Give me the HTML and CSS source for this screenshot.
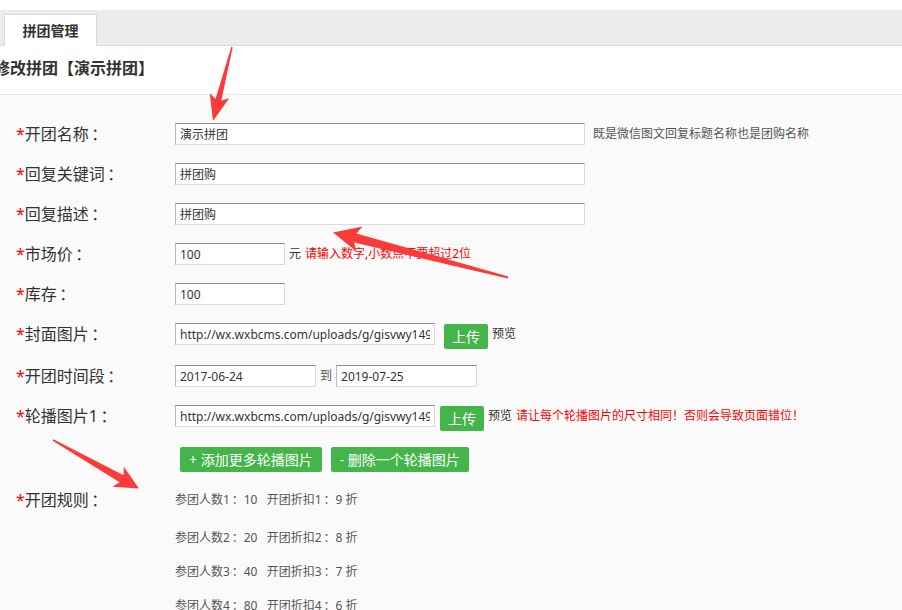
FILE: index.html
```html
<!DOCTYPE html>
<html lang="zh-CN">
<head>
<meta charset="utf-8">
<title>拼团管理</title>
<link rel="stylesheet" href="styles.css">
</head>
<body>
<div class="top">
  <div class="tabbar"><div class="tab">拼团管理</div></div>
  <div class="head"><h2 class="title">修改拼团【演示拼团】</h2></div>
</div>
<form class="form">
  <div class="row">
    <div class="label"><span class="req">*</span>开团名称<span class="p">：</span></div>
    <div class="field"><input class="input w-lg" value="演示拼团"><span class="hint">既是微信图文回复标题名称也是团购名称</span></div>
  </div>
  <div class="row">
    <div class="label"><span class="req">*</span>回复关键词<span class="p">：</span></div>
    <div class="field"><input class="input w-lg" value="拼团购"></div>
  </div>
  <div class="row">
    <div class="label"><span class="req">*</span>回复描述<span class="p">：</span></div>
    <div class="field"><input class="input w-lg" value="拼团购"></div>
  </div>
  <div class="row">
    <div class="label"><span class="req">*</span>市场价<span class="p">：</span></div>
    <div class="field"><input class="input w-sm" value="100"><span class="unit">元</span><span class="err">请输入数字,小数点不要超过2位</span></div>
  </div>
  <div class="row">
    <div class="label"><span class="req">*</span>库存<span class="p">：</span></div>
    <div class="field"><input class="input w-sm" value="100"></div>
  </div>
  <div class="row row-tall">
    <div class="label"><span class="req">*</span>封面图片<span class="p">：</span></div>
    <div class="field"><input class="input w-md" value="http://wx.wxbcms.com/uploads/g/gisvwy1495012345/5/a/3/thumb_5923e5b4.jpg"><span class="btn btn-up upload-a">上传</span><span class="preview">预览</span></div>
  </div>
  <div class="row">
    <div class="label"><span class="req">*</span>开团时间段<span class="p">：</span></div>
    <div class="field"><input class="input w-date" value="2017-06-24"><span class="to">到</span><input class="input w-date" value="2019-07-25"></div>
  </div>
  <div class="row row-tall">
    <div class="label"><span class="req">*</span>轮播图片1<span class="p">：</span></div>
    <div class="field"><input class="input w-md" value="http://wx.wxbcms.com/uploads/g/gisvwy1495012345/5/a/3/thumb_5923e5b4.jpg"><span class="btn btn-up upload-b">上传</span><span class="preview">预览</span><span class="err">请让每个轮播图片的尺寸相同！否则会导致页面错位！</span></div>
  </div>
  <div class="actions">
    <span class="btn btn-wide">+ 添加更多轮播图片</span>
    <span class="btn btn-wide">- 删除一个轮播图片</span>
  </div>
  <div class="row">
    <div class="label"><span class="req">*</span>开团规则<span class="p">：</span></div>
    <div class="rules">
      <div class="rule rule-first">参团人数1<span class="p">：</span>10&nbsp;&nbsp;&nbsp;开团折扣1<span class="p">：</span>9 折</div>
      <div class="rule">参团人数2<span class="p">：</span>20&nbsp;&nbsp;&nbsp;开团折扣2<span class="p">：</span>8 折</div>
      <div class="rule">参团人数3<span class="p">：</span>40&nbsp;&nbsp;&nbsp;开团折扣3<span class="p">：</span>7 折</div>
      <div class="rule">参团人数4<span class="p">：</span>80&nbsp;&nbsp;&nbsp;开团折扣4<span class="p">：</span>6 折</div>
    </div>
  </div>
</form>
<svg class="marks" width="902" height="610" viewBox="0 0 902 610" aria-hidden="true">
  <polygon points="232.68,47.17 221.38,100.44 229.16,98.31 213,121 209.78,93.33 215.58,98.94 231.32,46.83"/>
  <polygon points="508.25,276.5 356.4,233.4 362.5,226.5 333,232.5 356.5,251.5 354.2,242.6 507.75,278.5"/>
  <polygon points="52.6,440.7 119.64,482.15 112.45,486.73 139,488.5 123.75,466.67 123.56,475.17 53.4,439.3"/>
</svg>
</body>
</html>
```

FILE: styles.css
```css
html, body {
  margin: 0;
  padding: 0;
  overflow: hidden;
}

body {
  background: #fafafa;
  font-family: "Noto Sans", "Noto Sans CJK SC", sans-serif;
  color: #333;
}

.p {
  margin-left: 0.15em;
}

.top {
  background: #fff;
  padding-top: 10px;
}

.tabbar {
  height: 35px;
  background: #ececec;
  border-bottom: 1px solid #dcdce6;
  display: flex;
  align-items: flex-end;
  padding-left: 4px;
}

.tab {
  width: 91px;
  height: 31px;
  line-height: 31px;
  text-align: center;
  background: #fff;
  border: 1px solid #d6dae3;
  border-bottom: 0;
  margin-bottom: -1px;
  font-size: 14px;
  font-weight: bold;
  color: #333;
}

.head {
  height: 48px;
  border-bottom: 1px solid #e6e6e6;
}

.title {
  margin: 0 0 0 -6px;
  line-height: 44px;
  font-size: 16px;
  font-weight: bold;
  color: #333;
  white-space: nowrap;
}

.form {
  margin: 0;
  padding: 28px 0 0 16px;
}

.row {
  display: flex;
  align-items: flex-start;
  margin-bottom: 18px;
}

.row-tall {
  margin-bottom: 16px;
}

.label {
  width: 159px;
  flex: none;
  font-size: 16px;
  line-height: 22px;
  color: #333;
  white-space: nowrap;
}

.req {
  color: #f00;
}

.field {
  display: flex;
  align-items: flex-start;
  font-size: 12px;
  line-height: 22px;
  white-space: nowrap;
}

.input {
  box-sizing: border-box;
  height: 22px;
  margin: 0;
  padding: 0 4px;
  border: 1px solid #dadada;
  border-top-color: #8c8c8c;
  border-left-color: #b8b8b8;
  background: #fff;
  font-family: "Noto Sans", "Noto Sans CJK SC", sans-serif;
  font-size: 12px;
  color: #333;
  outline: none;
}

.w-lg { width: 410px; }
.w-sm { width: 110px; }
.w-md { width: 260px; }
.w-date { width: 141px; }

.hint {
  margin-left: 8px;
  color: #555;
}

.unit {
  margin-left: 4px;
  color: #333;
}

.err {
  margin-left: 4px;
  color: #f00;
}

.to {
  margin: 0 4px 0 4px;
  color: #555;
}

.preview {
  margin-left: 4px;
  color: #333;
}

.btn {
  display: inline-block;
  height: 25px;
  line-height: 25px;
  background: #44b549;
  color: #fff;
  border-radius: 2px;
  font-size: 14px;
  white-space: nowrap;
}

.btn-up {
  width: 44px;
  text-align: center;
  margin-top: 1px;
}

.upload-a { margin-left: 9px; }
.upload-b { margin-left: 5px; }

.btn-wide {
  padding: 0 9px;
}

.actions {
  display: flex;
  gap: 9px;
  margin: 0 0 17px 164px;
}

.rules {
  display: flex;
  flex-direction: column;
}

.rule {
  font-size: 12px;
  line-height: 22px;
  color: #555;
  margin-bottom: 12px;
  white-space: nowrap;
}

.rule-first {
  margin-bottom: 16px;
}

.marks {
  position: absolute;
  left: 0;
  top: 0;
  pointer-events: none;
  fill: #fb3a3a;
}
```
